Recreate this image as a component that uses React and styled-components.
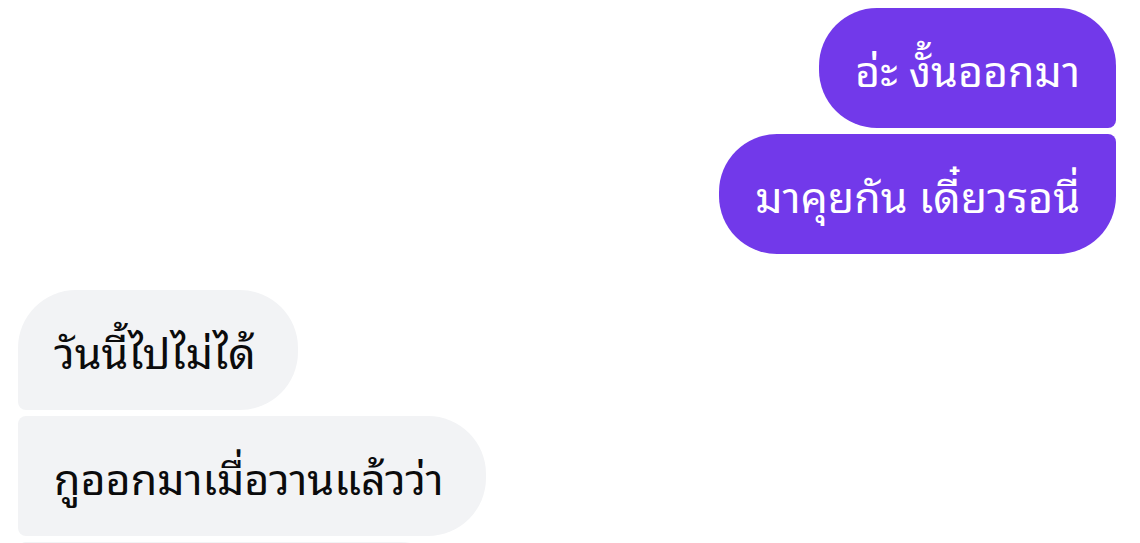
import React from "react";
import styled, { createGlobalStyle, css } from "styled-components";

const Global = createGlobalStyle`
  html, body { margin: 0; padding: 0; background: #ffffff; overflow: hidden; }
  body { font-family: "Noto Sans Thai Looped", "Noto Sans", sans-serif; }
`;

const Thread = styled.div`
  display: flex;
  flex-direction: column;
  padding: 8px 24px 0 18px;
  height: 543px;
  box-sizing: border-box;
  overflow: hidden;
`;

const Group = styled.div`
  display: flex;
  flex-direction: column;
  align-items: ${(p) => (p.$mine ? "flex-end" : "flex-start")};
  gap: 6px;
  & + & { margin-top: 36px; }
`;

const BIG = "58px";
const SMALL = "8px";

const Bubble = styled.div`
  box-sizing: border-box;
  height: 120px;
  min-width: ${(p) => p.$minWidth || "0"};
  display: flex;
  align-items: center;
  padding: 0 36px 2px 36px;
  font-size: 43px;
  line-height: 1;
  white-space: nowrap;
  flex-shrink: 0;
  ${(p) =>
    p.$mine
      ? css`
          background: #7239ea;
          color: #ffffff;
          border-radius: ${BIG} ${p.$first ? BIG : SMALL} ${p.$last ? BIG : SMALL} ${BIG};
        `
      : css`
          background: #f2f3f5;
          color: #0b0b0c;
          padding-right: 42px;
          border-radius: ${p.$first ? BIG : SMALL} ${BIG} ${BIG} ${p.$last ? BIG : SMALL};
        `}
`;

const groups = [
  { mine: true, items: [{ t: "อ่ะ งั้นออกมา" }, { t: "มาคุยกัน เดี๋ยวรอนี่" }] },
  {
    mine: false,
    items: [
      { t: "วันนี้ไปไม่ได้" },
      { t: "กูออกมาเมื่อวานแล้วว่า" },
      { t: "", w: "440px" },
    ],
  },
];

export default function App() {
  return (
    <>
      <Global />
      <Thread>
        {groups.map((g, gi) => (
          <Group key={gi} $mine={g.mine}>
            {g.items.map((it, i) => (
              <Bubble
                key={i}
                $mine={g.mine}
                $first={i === 0}
                $last={i === g.items.length - 1}
                $minWidth={it.w}
              >
                {it.t}
              </Bubble>
            ))}
          </Group>
        ))}
      </Thread>
    </>
  );
}
